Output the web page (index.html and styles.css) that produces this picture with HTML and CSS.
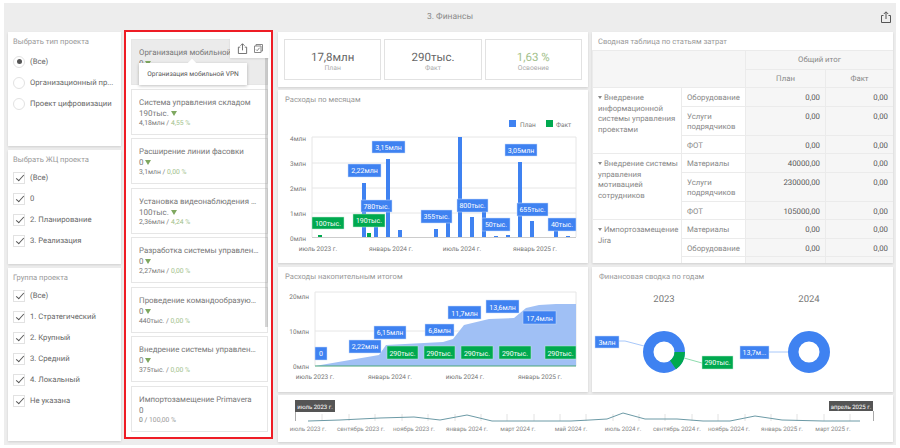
FILE: index.html
```html
<!DOCTYPE html>
<html lang="ru">
<head>
    <meta charset="UTF-8">
    <title>3. Финансы</title>
    <link rel="stylesheet" href="styles.css">
</head>
<body>
<div class="dash">
    <div class="head">
        <span class="head_title">3. Финансы</span>
        <svg class="head_icon" width="12" height="12" viewBox="0 0 12 12"><path d="M3.5 4.5H1.5V11.5H10.5V4.5H8.5M6 8V1M3.8 3L6 .8 8.2 3" fill="none" stroke="#555" stroke-width="1"/></svg>
    </div>
    <div class="body">
        <div class="left">
            <div class="panel filter filter_short filter_radio">
                <div class="title">Выбрать тип проекта</div>
                <div class="opt"><span class="radio radio_on"></span>(Все)</div>
                <div class="opt"><span class="radio"></span>Организационный пр...</div>
                <div class="opt"><span class="radio"></span>Проект цифровизации</div>
            </div>
            <div class="panel filter filter_short">
                <div class="title">Выбрать ЖЦ проекта</div>
                <div class="opt opt_check"><span class="check"></span>(Все)</div>
                <div class="opt opt_check"><span class="check"></span>0</div>
                <div class="opt opt_check"><span class="check"></span>2. Планирование</div>
                <div class="opt opt_check"><span class="check"></span>3. Реализация</div>
            </div>
            <div class="panel filter filter_long">
                <div class="title">Группа проекта</div>
                <div class="opt opt_check"><span class="check"></span>(Все)</div>
                <div class="opt opt_check"><span class="check"></span>1. Стратегический</div>
                <div class="opt opt_check"><span class="check"></span>2. Крупный</div>
                <div class="opt opt_check"><span class="check"></span>3. Средний</div>
                <div class="opt opt_check"><span class="check"></span>4. Локальный</div>
                <div class="opt opt_check"><span class="check"></span>Не указана</div>
            </div>
        </div>

        <div class="projects">
            <div class="card card_active">
                <div class="card_name">Организация мобильной VPN</div>
                <div class="card_val">0 <span class="tri"></span></div>
                <div class="card_sub">0 / <span class="green">0,00 %</span></div>
            </div>
            <div class="card">
                <div class="card_name">Система управления складом</div>
                <div class="card_val">190тыс. <span class="tri"></span></div>
                <div class="card_sub">4,18млн / <span class="green">4,55 %</span></div>
            </div>
            <div class="card">
                <div class="card_name">Расширение линии фасовки</div>
                <div class="card_val">0 <span class="tri"></span></div>
                <div class="card_sub">3,1млн / <span class="green">0,00 %</span></div>
            </div>
            <div class="card">
                <div class="card_name">Установка видеонаблюдения на складе</div>
                <div class="card_val">100тыс. <span class="tri"></span></div>
                <div class="card_sub">2,36млн / <span class="green">4,24 %</span></div>
            </div>
            <div class="card">
                <div class="card_name">Разработка системы управления рисками</div>
                <div class="card_val">0 <span class="tri"></span></div>
                <div class="card_sub">2,27млн / <span class="green">0,00 %</span></div>
            </div>
            <div class="card">
                <div class="card_name">Проведение командообразующих тренингов</div>
                <div class="card_val">0 <span class="tri"></span></div>
                <div class="card_sub">440тыс. / <span class="green">0,00 %</span></div>
            </div>
            <div class="card">
                <div class="card_name">Внедрение системы управления задачами</div>
                <div class="card_val">0 <span class="tri"></span></div>
                <div class="card_sub">375тыс. / <span class="green">0,00 %</span></div>
            </div>
            <div class="card">
                <div class="card_name">Импортозамещение Primavera</div>
                <div class="card_val">0</div>
                <div class="card_sub">0 / <span class="gray">100,00 %</span></div>
            </div>
            <div class="scroll"></div>
            <div class="actions">
                <svg width="11" height="11" viewBox="0 0 12 12"><path d="M3.5 4.5H1.5V11.5H10.5V4.5H8.5M6 8V1M3.8 3L6 .8 8.2 3" fill="none" stroke="#666" stroke-width="1"/></svg>
                <svg width="9" height="9" viewBox="0 0 9 9"><path d="M2 2V.5H8.500V7H7M.5 2H7V8.500H.5ZM2 5.500L3.200 6.700 5.500 3.800" fill="none" stroke="#888" stroke-width="1"/></svg>
            </div>
            <div class="tip">Организация мобильной VPN</div>
        </div>

        <div class="main">
            <div class="main_top">
                <div class="mid">
                    <div class="panel kpis">
                        <div class="kpi"><div class="kpi_val">17,8млн</div><div class="kpi_lab">План</div></div>
                        <div class="kpi"><div class="kpi_val">290тыс.</div><div class="kpi_lab">Факт</div></div>
                        <div class="kpi"><div class="kpi_val green">1,63 %</div><div class="kpi_lab">Освоение</div></div>
                    </div>
                    <div class="panel chart_tall">
                        <div class="title title_chart">Расходы по месяцам</div>
                        <svg class="plot" width="310" height="155" viewBox="278 108 310 155">
                            <rect x="509" y="120" width="7" height="7" fill="#3f82f1"/><text class="ax" x="520" y="127">План</text>
                            <rect x="546" y="120" width="7" height="7" fill="#00a94f"/><text class="ax" x="556" y="127">Факт</text>
                            <path d="M312 137H576M312 163H576M312 188H576M312 213H576M312 137V237M576 137V237" stroke="#e6e6e6" fill="none"/>
                            <path d="M312 237.500H576" stroke="#ccc"/>
                            <text class="ax" x="306" y="141" text-anchor="end">4млн</text>
                            <text class="ax" x="306" y="166" text-anchor="end">3млн</text>
                            <text class="ax" x="306" y="191" text-anchor="end">2млн</text>
                            <text class="ax" x="306" y="216" text-anchor="end">1млн</text>
                            <text class="ax" x="306" y="241" text-anchor="end">0млн</text>
                            <text class="ax" x="318" y="251" text-anchor="middle">июль 2023 г.</text>
                            <text class="ax" x="391" y="251" text-anchor="middle">январь 2024 г.</text>
                            <text class="ax" x="462" y="251" text-anchor="middle">июль 2024 г.</text>
                            <text class="ax" x="535" y="251" text-anchor="middle">январь 2025 г.</text>
                            <g fill="#3f82f1">
                                <rect x="362" y="183" width="4" height="54"/>
                                <rect x="374" y="225" width="4" height="12"/>
                                <rect x="386" y="159" width="4" height="78"/>
                                <rect x="398" y="230" width="4" height="7"/>
                                <rect x="434" y="229" width="4" height="8"/>
                                <rect x="446" y="222" width="4" height="15"/>
                                <rect x="458" y="137" width="4" height="100"/>
                                <rect x="470" y="217" width="4" height="20"/>
                                <rect x="482" y="212" width="4" height="25"/>
                                <rect x="494" y="236" width="4" height="1"/>
                                <rect x="506" y="235" width="4" height="2"/>
                                <rect x="518" y="162" width="4" height="75"/>
                                <rect x="530" y="221" width="4" height="16"/>
                                <rect x="554" y="230" width="4" height="7"/>
                                <rect x="566" y="236" width="4" height="1"/>
                            </g>
                            <rect x="318" y="235" width="4" height="2" fill="#00a94f"/>
                            <rect x="367" y="233" width="4" height="4" fill="#00a94f"/>
                            <g class="lab_blue">
                                <rect x="372" y="141" width="33" height="12"/>
                                <rect x="348" y="164" width="33" height="13"/>
                                <rect x="361" y="200" width="31" height="12"/>
                                <rect x="421" y="210" width="31" height="13"/>
                                <rect x="457" y="199" width="31" height="13"/>
                                <rect x="482" y="218" width="28" height="13"/>
                                <rect x="505" y="144" width="32" height="12"/>
                                <rect x="517" y="203" width="31" height="13"/>
                                <rect x="548" y="218" width="28" height="13"/>
                            </g>
                            <g class="lab_green">
                                <rect x="312" y="217" width="32" height="12"/>
                                <rect x="353" y="214" width="32" height="13"/>
                            </g>
                            <g class="lab_text">
                                <text x="388.500" y="150">3,15млн</text>
                                <text x="364.500" y="173">2,22млн</text>
                                <text x="376.500" y="209">780тыс.</text>
                                <text x="436.500" y="219">355тыс.</text>
                                <text x="472.500" y="208">800тыс.</text>
                                <text x="496" y="227">50тыс.</text>
                                <text x="521" y="153">3,05млн</text>
                                <text x="532.500" y="212">655тыс.</text>
                                <text x="562" y="227">40тыс.</text>
                                <text x="328" y="226">100тыс.</text>
                                <text x="369" y="223">190тыс.</text>
                            </g>
                        </svg>
                    </div>
                    <div class="panel chart_low">
                        <div class="title title_chart">Расходы накопительным итогом</div>
                        <svg class="plot" width="310" height="107" viewBox="278 285 310 107">
                            <path d="M315 292H576M315 331H576M315 292V366M576 292V366" stroke="#e6e6e6" fill="none"/>
                            <path d="M315 366L379 355 386 345 443 342 453 339 464 325 489 319 514 318 526 308 539 305 556 304 576 304V366Z" fill="#a0c0f5"/>
                            <path d="M315 366H576" stroke="#4aa67a"/>
                            <text class="ax" x="309" y="299" text-anchor="end">20млн</text>
                            <text class="ax" x="309" y="334" text-anchor="end">10млн</text>
                            <text class="ax" x="309" y="369" text-anchor="end">0млн</text>
                            <text class="ax" x="315" y="379" text-anchor="middle">июль 2023 г.</text>
                            <text class="ax" x="390" y="379" text-anchor="middle">январь 2024 г.</text>
                            <text class="ax" x="465" y="379" text-anchor="middle">июль 2024 г.</text>
                            <text class="ax" x="540" y="379" text-anchor="middle">январь 2025 г.</text>
                            <g class="lab_blue">
                                <rect x="315" y="347" width="12" height="13"/>
                                <rect x="349" y="340" width="32" height="13"/>
                                <rect x="374" y="326" width="32" height="13"/>
                                <rect x="425" y="324" width="29" height="12"/>
                                <rect x="448" y="306" width="33" height="13"/>
                                <rect x="486" y="300" width="33" height="13"/>
                                <rect x="523" y="311" width="33" height="13"/>
                            </g>
                            <g class="lab_green">
                                <rect x="387" y="346" width="31" height="13"/>
                                <rect x="424" y="346" width="31" height="13"/>
                                <rect x="461" y="346" width="32" height="13"/>
                                <rect x="499" y="346" width="32" height="13"/>
                                <rect x="545" y="346" width="31" height="13"/>
                            </g>
                            <g class="lab_text">
                                <text x="321" y="356">0</text>
                                <text x="365" y="349">2,22млн</text>
                                <text x="390" y="335">6,15млн</text>
                                <text x="439.500" y="333">6,8млн</text>
                                <text x="464.500" y="316">11,7млн</text>
                                <text x="502.500" y="310">13,6млн</text>
                                <text x="539.500" y="321">17,4млн</text>
                                <text x="402.500" y="356">290тыс.</text>
                                <text x="439.500" y="356">290тыс.</text>
                                <text x="477" y="356">290тыс.</text>
                                <text x="515" y="356">290тыс.</text>
                                <text x="560.500" y="356">290тыс.</text>
                            </g>
                        </svg>
                    </div>
                </div>
                <div class="side">
                    <div class="panel table_panel">
                        <div class="title title_table">Сводная таблица по статьям затрат</div>
                        <table class="pivot">
                            <colgroup>
                                <col class="col_a"><col class="col_b"><col class="col_c"><col class="col_d">
                            </colgroup>
                            <tr class="row_s">
                                <th rowspan="2" colspan="2"></th>
                                <th colspan="2">Общий итог</th>
                            </tr>
                            <tr class="row_s"><th>План</th><th>Факт</th></tr>
                            <tr class="row_s">
                                <td rowspan="3" class="group"><span class="caret"></span>Внедрение информационной системы управления проектами</td>
                                <td class="item">Оборудование</td><td class="num">0,00</td><td class="num">0,00</td>
                            </tr>
                            <tr class="row_l"><td class="item">Услуги подрядчиков</td><td class="num">0,00</td><td class="num">0,00</td></tr>
                            <tr class="row_s"><td class="item">ФОТ</td><td class="num">0,00</td><td class="num">0,00</td></tr>
                            <tr class="row_s">
                                <td rowspan="3" class="group"><span class="caret"></span>Внедрение системы управления мотивацией сотрудников</td>
                                <td class="item">Материалы</td><td class="num">40000,00</td><td class="num">0,00</td>
                            </tr>
                            <tr class="row_l"><td class="item">Услуги подрядчиков</td><td class="num">230000,00</td><td class="num">0,00</td></tr>
                            <tr class="row_s"><td class="item">ФОТ</td><td class="num">105000,00</td><td class="num">0,00</td></tr>
                            <tr class="row_s">
                                <td rowspan="3" class="group"><span class="caret"></span>Импортозамещение Jira</td>
                                <td class="item">Материалы</td><td class="num">0,00</td><td class="num">0,00</td>
                            </tr>
                            <tr class="row_s"><td class="item">Оборудование</td><td class="num">0,00</td><td class="num">0,00</td></tr>
                            <tr class="row_s"><td class="item">ФОТ</td><td class="num">0,00</td><td class="num">0,00</td></tr>
                        </table>
                    </div>
                    <div class="panel chart_low">
                        <div class="title title_chart">Финансовая сводка по годам</div>
                        <svg class="plot" width="301" height="107" viewBox="592 285 301 107">
                            <text class="year" x="664" y="302">2023</text>
                            <text class="year" x="809" y="302">2024</text>
                            <circle cx="664" cy="352" r="15.750" fill="none" stroke="#3f82f1" stroke-width="10.500"/>
                            <path d="M685 352A21 21 0 0 1 676 369.200L670 360.600A10.500 10.500 0 0 0 674.500 352Z" fill="#00a94f"/>
                            <circle cx="809" cy="352" r="15.750" fill="none" stroke="#3f82f1" stroke-width="10.500"/>
                            <path d="M619 341H625L644 346" fill="none" stroke="#a8c8fa"/>
                            <path d="M684 358L702 363" fill="none" stroke="#8fdcae"/>
                            <path d="M769 352H788" fill="none" stroke="#a8c8fa"/>
                            <g class="lab_blue">
                                <rect x="595" y="336" width="24" height="12"/>
                                <rect x="740" y="346" width="29" height="13"/>
                            </g>
                            <g class="lab_green"><rect x="702" y="356" width="31" height="13"/></g>
                            <g class="lab_text">
                                <text x="607" y="345">3млн</text>
                                <text x="754.500" y="355">13,7м...</text>
                                <text x="717.500" y="365">290тыс.</text>
                            </g>
                        </svg>
                    </div>
                </div>
            </div>
            <div class="panel timeline">
                <svg width="615" height="47" viewBox="278 395 615 47">
                    <path d="M322 414V421M349 414V421M375 414V421M402 414V421M428 414V421M455 414V421M481 414V421M507 414V421M534 414V421M560 414V421M586 414V421M613 414V421M639 414V421M665 414V421M692 414V421M718 414V421M745 414V421M771 414V421M797 414V421M824 414V421M850 414V421" stroke="#e2e2e2"/>
                    <path d="M308 421L340 420 380 418 414 417 440 420 467 415 492 421 518 421 571 421 590 420 607 419 623 413 645 419 677 419 703 421 730 421 755 416 782 420 823 421 860 421" fill="none" stroke="#6c9aa6" stroke-width="1"/>
                    <path d="M295.500 412V421M873.500 411V421" stroke="#aaa"/>
                    <rect x="295" y="400" width="40" height="12" fill="#555"/>
                    <rect x="829" y="401" width="44" height="10" fill="#555"/>
                    <text class="tag" x="315" y="408.500">июль 2023 г.</text>
                    <text class="tag" x="851" y="408.500">апрель 2025 г.</text>
                    <g class="tick">
                        <text x="308" y="431">июль 2023 г.</text>
                        <text x="361" y="431">сентябрь 2023 г.</text>
                        <text x="414" y="431">ноябрь 2023 г.</text>
                        <text x="467" y="431">январь 2024 г.</text>
                        <text x="518" y="431">март 2024 г.</text>
                        <text x="571" y="431">май 2024 г.</text>
                        <text x="623" y="431">июль 2024 г.</text>
                        <text x="677" y="431">сентябрь 2024 г.</text>
                        <text x="729" y="431">ноябрь 2024 г.</text>
                        <text x="782" y="431">январь 2025 г.</text>
                        <text x="833" y="431">март 2025 г.</text>
                    </g>
                </svg>
            </div>
        </div>
    </div>
</div>
</body>
</html>
```
FILE: styles.css
```css
html, body {
    margin: 0;
    padding: 0;
    background-color: #ffffff;
}

body {
    font-family: Roboto, "Liberation Sans", sans-serif;
    color: #666666;
    overflow: hidden;
    text-rendering: geometricPrecision;
}

svg {
    display: block;
    font-family: Roboto, "Liberation Sans", sans-serif;
}

.dash {
    width: 892px;
    height: 442px;
    margin: 3px 0 0 4px;
    background-color: #ededed;
}

.head {
    height: 27px;
    display: flex;
    align-items: center;
    justify-content: center;
    position: relative;
    font-size: 8.5px;
    color: #8a8a8a;
}

.head_icon {
    position: absolute;
    right: 4px;
    top: 8px;
}

.body {
    display: flex;
}

.panel {
    background-color: #ffffff;
    box-shadow: 0 1px 2px rgba(0, 0, 0, 0.12);
    box-sizing: border-box;
}

.title {
    font-size: 7.6px;
    line-height: 11px;
    color: #999999;
}

/* filters */
.left {
    width: 113px;
    margin: 2px 0 0 4px;
    display: flex;
    flex-direction: column;
    gap: 4px;
}

.filter {
    padding: 4px 0 0 5px;
}

.filter_short {
    height: 114px;
}

.filter_long {
    height: 173px;
}

.opt {
    height: 21px;
    display: flex;
    align-items: center;
    gap: 5px;
    font-size: 7.700px;
    color: #666666;
    white-space: nowrap;
}

.filter .title {
    margin-bottom: 2px;
}

.filter_radio .title {
    margin-bottom: 4px;
}

.radio {
    width: 12px;
    height: 12px;
    border: 1px solid #e2e2e2;
    border-radius: 50%;
    box-sizing: border-box;
    flex-shrink: 0;
    display: flex;
    align-items: center;
    justify-content: center;
}

.radio_on::after {
    content: "";
    width: 5px;
    height: 5px;
    border-radius: 50%;
    background-color: #555555;
}

.check {
    width: 12px;
    height: 12px;
    border: 1px solid #e2e2e2;
    box-sizing: border-box;
    flex-shrink: 0;
    position: relative;
}

.check::after {
    content: "";
    position: absolute;
    left: 3.5px;
    top: 0.5px;
    width: 3px;
    height: 7px;
    border-right: 1.2px solid #555555;
    border-bottom: 1.2px solid #555555;
    transform: rotate(42deg);
}

/* project list */
.projects {
    width: 149px;
    height: 409px;
    margin-left: 3px;
    padding: 7px 0 0 5px;
    border: 2px solid #ee1c25;
    background-color: #ffffff;
    box-sizing: border-box;
    display: flex;
    flex-direction: column;
    gap: 3.500px;
    position: relative;
}

.card {
    width: 137px;
    height: 46px;
    flex-shrink: 0;
    padding: 7px 8px 0 7px;
    border: 1px solid #e6e6e6;
    box-sizing: border-box;
}

.card_active {
    background-color: #ebebeb;
}

.card_name {
    font-size: 7.900px;
    line-height: 11px;
    color: #777777;
    white-space: nowrap;
    overflow: hidden;
    text-overflow: ellipsis;
}

.card_val {
    margin-top: 1px;
    font-size: 8px;
    line-height: 10px;
    color: #777777;
}

.tri {
    display: inline-block;
    border-left: 3px solid transparent;
    border-right: 3px solid transparent;
    border-top: 5px solid #7fa860;
}

.card_sub {
    font-size: 6.800px;
    line-height: 9px;
    color: #777777;
}

.green {
    color: #a2bf8b;
}

.gray {
    color: #999999;
}

.scroll {
    position: absolute;
    left: 139px;
    top: 7px;
    width: 3px;
    height: 288px;
    background-color: rgba(150, 150, 150, 0.4);
}

.actions {
    position: absolute;
    left: 104px;
    top: 6px;
    width: 39px;
    height: 20px;
    background-color: #ffffff;
    box-shadow: 0 1px 2px rgba(0, 0, 0, 0.1);
    display: flex;
    align-items: center;
    justify-content: center;
    gap: 6px;
}

.tip {
    position: absolute;
    left: 13px;
    top: 31px;
    width: 108px;
    height: 22px;
    background-color: #ffffff;
    box-shadow: 0 1px 3px rgba(0, 0, 0, 0.25);
    font-size: 6.6px;
    color: #555555;
    display: flex;
    align-items: center;
    justify-content: center;
}

.tip::before {
    content: "";
    position: absolute;
    left: 50px;
    top: -3px;
    width: 6px;
    height: 6px;
    background-color: #ffffff;
    transform: rotate(45deg);
}

/* main area */
.main {
    margin: 2px 0 0 5px;
    display: flex;
    flex-direction: column;
    gap: 3px;
}

.main_top {
    display: flex;
    gap: 4px;
}

.mid {
    width: 310px;
    display: flex;
    flex-direction: column;
    gap: 3px;
}

.side {
    width: 301px;
    display: flex;
    flex-direction: column;
    gap: 4px;
}

.kpis {
    height: 55px;
    padding: 7px 6px;
    display: flex;
    gap: 3px;
}

.kpi {
    flex: 1;
    padding-top: 3px;
    border: 1px solid #e2e2e2;
    box-sizing: border-box;
    display: flex;
    flex-direction: column;
    align-items: center;
    justify-content: center;
}

.kpi_val {
    font-size: 11.500px;
    line-height: 14px;
    color: #666666;
}

.kpi_val.green {
    color: #a2bf8b;
}

.kpi_lab {
    font-size: 6.800px;
    line-height: 9px;
    color: #aaaaaa;
}

.chart_tall {
    height: 173px;
    margin-bottom: 1px;
}

.chart_low {
    height: 125px;
}

.title_chart {
    height: 18px;
    padding: 4px 0 0 7px;
    box-sizing: border-box;
}

.ax {
    font-size: 6.500px;
    fill: #777777;
}

.lab_blue rect {
    fill: #3f82f1;
    stroke: #c5d9fb;
    stroke-width: 0.5;
}

.lab_green rect {
    fill: #00a94f;
    stroke: #bfe9d2;
    stroke-width: 0.5;
}

.lab_text text {
    font-size: 7px;
    fill: #ffffff;
    text-anchor: middle;
}

.year {
    font-size: 9.500px;
    fill: #777777;
    text-anchor: middle;
}

/* pivot table */
.table_panel {
    height: 231px;
    overflow: hidden;
}

.title_table {
    height: 18px;
    padding: 4px 0 0 6px;
    box-sizing: border-box;
}

.pivot {
    width: 301px;
    table-layout: fixed;
    border-collapse: collapse;
    font-size: 7.800px;
    color: #888888;
}

.col_a {
    width: 89px;
}

.col_b {
    width: 64px;
}

.col_c {
    width: 80px;
}

.col_d {
    width: 68px;
}

.pivot th {
    background-color: #f6f6f6;
    border: 1px solid #ebebeb;
    font-weight: normal;
    padding: 0;
}

.pivot td {
    border: 1px solid #ebebeb;
    padding: 2px 5px;
    vertical-align: top;
    line-height: 10.500px;
}

.row_s {
    height: 18.500px;
}

.row_l {
    height: 29px;
}

.pivot .group {
    padding: 5px 1px 0 5px;
}

.caret {
    display: inline-block;
    margin-right: 2px;
    vertical-align: middle;
    border-left: 2px solid transparent;
    border-right: 2px solid transparent;
    border-top: 3px solid #888888;
}

.pivot .num {
    background-color: #f6f6f6;
    text-align: right;
    color: #555555;
    padding-top: 5px;
}

.pivot .item {
    padding-top: 5px;
}

/* timeline */
.timeline {
    height: 47px;
}

.tag {
    font-size: 6px;
    fill: #ffffff;
    text-anchor: middle;
}

.tick text {
    font-size: 6.200px;
    fill: #888888;
    text-anchor: middle;
}
```
